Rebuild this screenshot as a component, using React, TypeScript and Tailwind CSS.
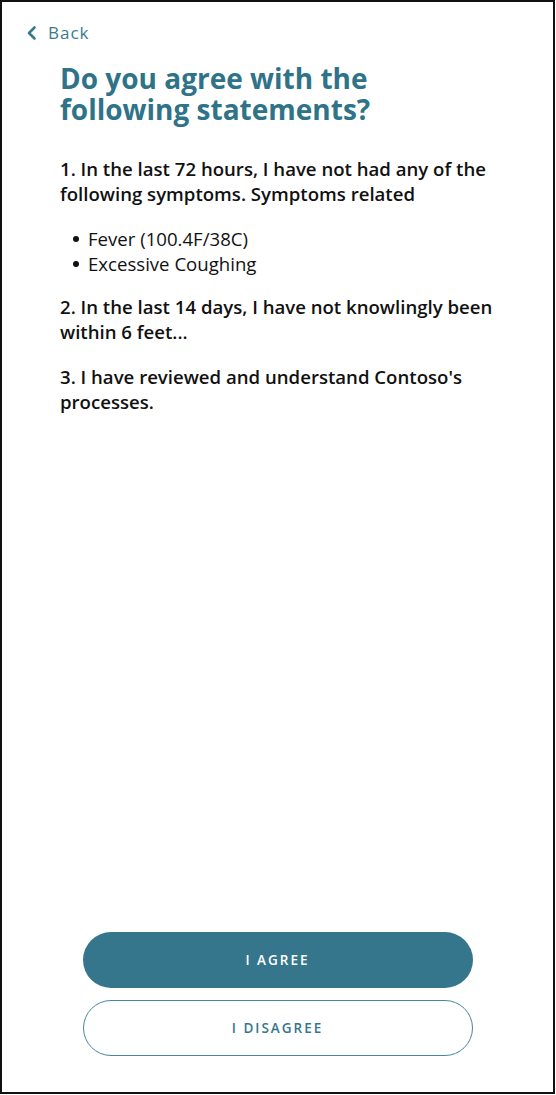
import React from "react";

export default function App() {
  return (
    <div className="w-[556px] h-[1095px] bg-white" style={{ fontFamily: '"Open Sans", sans-serif' }}>
      <div className="w-[555px] h-[1094px] border-2 border-[#111] flex flex-col">
        <div className="flex items-center pl-[23px] pt-[16px] h-[46px] text-[#3a7a8e]">
          <svg width="14" height="16" viewBox="0 0 14 16" className="mr-[9px]">
            <path d="M9.5 2.5 L4 8 L9.5 13.5" fill="none" stroke="#3a7a8e" strokeWidth="2.6" strokeLinecap="round" strokeLinejoin="round" />
          </svg>
          <span className="text-[17px] tracking-[1px]">Back</span>
        </div>
        <div className="pl-[58px] w-[500px]">
          <h1 className="mt-[15px] text-[28px] leading-[31px] font-bold text-[#2f7388]">
            Do you agree with the following statements?
          </h1>
          <div className="mt-[31px] text-[18.6px] leading-[25px] text-[#111]">
            <p className="font-semibold">1. In the last 72 hours, I have not had any of the following symptoms. Symptoms related</p>
            <ul className="mt-[20px] pl-[13px]">
              <li className="flex items-center"><span className="w-[6px] h-[6px] rounded-full bg-[#111] mr-[9px]" />Fever (100.4F/38C)</li>
              <li className="flex items-center"><span className="w-[6px] h-[6px] rounded-full bg-[#111] mr-[9px]" />Excessive Coughing</li>
            </ul>
            <p className="font-semibold mt-[18px]">2. In the last 14 days, I have not knowlingly been within 6 feet...</p>
            <p className="font-semibold mt-[20px]">3. I have reviewed and understand Contoso's processes.</p>
          </div>
        </div>
        <div className="flex-1" />
        <div className="flex flex-col items-center gap-[12px] pb-[36px]">
          <button className="w-[390px] h-[56px] rounded-full bg-[#35768c] text-white text-[13.5px] font-semibold tracking-[2px]">
            I AGREE
          </button>
          <button className="w-[390px] h-[56px] rounded-full border-[1.5px] border-[#4a8599] bg-white text-[#35768c] text-[13.5px] font-semibold tracking-[2px]">
            I DISAGREE
          </button>
        </div>
      </div>
    </div>
  );
}
